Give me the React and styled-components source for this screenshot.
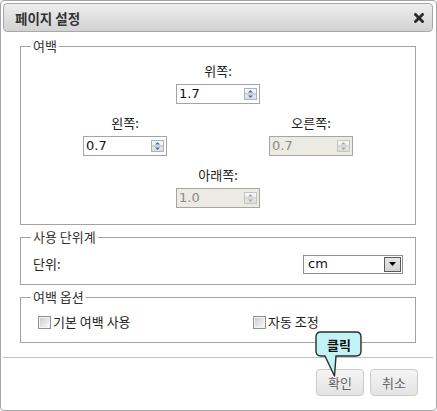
import React from 'react';
import styled, { createGlobalStyle } from 'styled-components';

const GlobalStyle = createGlobalStyle`
  html, body {
    margin: 0;
    padding: 0;
    background: #fff;
  }
  body {
    font-family: "Noto Sans CJK KR", "DejaVu Sans", sans-serif;
    font-size: 13px;
    color: #222;
  }
  * {
    box-sizing: border-box;
  }
`;

const Dialog = styled.div`
  position: relative;
  width: 437px;
  height: 411px;
  border: 1px solid #a6a6a6;
  border-radius: 4px;
  background: #fff;
  display: flex;
  flex-direction: column;
`;

const TitleBar = styled.div`
  margin: 2px 3px 0 2px;
  height: 29px;
  border: 1px solid #a8a8a8;
  border-radius: 4px;
  background: linear-gradient(#eeeeee, #d2d2d2);
  display: flex;
  align-items: center;
  justify-content: space-between;
  padding: 0 8px 0 11px;
`;

const Title = styled.span`
  font-size: 13.5px;
  font-weight: bold;
  color: #333;
  line-height: 16px;
`;

const CloseButton = styled.button`
  border: 0;
  padding: 0;
  background: none;
  width: 10px;
  height: 10px;
  display: flex;
  cursor: pointer;
`;

const Body = styled.div`
  padding: 6px 20px 0 19px;
  display: flex;
  flex-direction: column;
  gap: 4px;
`;

const Group = styled.fieldset`
  margin: 0;
  padding: 0;
  min-width: 0;
  border: 1px solid #a3a3a3;
`;

const Legend = styled.legend`
  margin-left: 10px;
  padding: 0 2px;
  font-size: 13px;
  line-height: 16px;
  color: #333;
`;

const MarginGrid = styled.div`
  display: grid;
  grid-template-columns: repeat(3, 93px);
  grid-template-rows: repeat(3, 41px);
  row-gap: 11px;
  justify-content: center;
  padding: 9px 0 16px;
`;

const Cell = styled.div`
  grid-column: ${p => p.$col};
  grid-row: ${p => p.$row};
  display: flex;
  flex-direction: column;
  align-items: center;
  gap: 5px;
`;

const Label = styled.span`
  font-size: 13px;
  line-height: 16px;
  color: #222;
`;

const SpinBox = styled.div`
  width: 84px;
  height: 20px;
  border: 1px solid #a5a5a5;
  background: ${p => (p.$disabled ? '#ebebe4' : '#fff')};
  display: flex;
  align-items: center;
  padding: 0 2px 0 2px;
`;

const Value = styled.span`
  flex: 1;
  font-family: "DejaVu Sans", sans-serif;
  font-size: 13px;
  line-height: 16px;
  color: ${p => (p.$disabled ? '#8a8a8a' : '#111')};
`;

const Row = styled.div`
  display: flex;
  align-items: center;
  justify-content: space-between;
  height: 20px;
  margin: 9px 12px 10px 12px;
`;

const Select = styled.div`
  width: 100px;
  height: 19px;
  border: 1px solid #8f8f8f;
  background: #fff;
  display: flex;
  align-items: center;
  padding: 0 1px 0 4px;
`;

const SelectText = styled.span`
  flex: 1;
  font-family: "DejaVu Sans", sans-serif;
  font-size: 13px;
  line-height: 16px;
  color: #111;
`;

const SelectButton = styled.span`
  width: 17px;
  height: 15px;
  border: 1px solid #5a5a5a;
  background: linear-gradient(#e6e6e6, #d2d2d2);
  display: flex;
  align-items: center;
  justify-content: center;
`;

const OptionRow = styled.div`
  display: grid;
  grid-template-columns: 215px 1fr;
  height: 16px;
  align-items: center;
  margin: 9px 0 12px 17px;
`;

const CheckLabel = styled.label`
  display: flex;
  align-items: center;
  gap: 2px;
  font-size: 13px;
  line-height: 16px;
  color: #222;
`;

const CheckBox = styled.span`
  width: 13px;
  height: 13px;
  border: 1px solid #8e8f8f;
  background: linear-gradient(135deg, #c4c4c4 0%, #e6e6e6 55%, #fbfbfb 100%);
  box-shadow: inset 0 0 0 1px #f4f4f4;
`;

const Divider = styled.div`
  margin: 14px 3px 0 2px;
  height: 1px;
  background: #c2c2c2;
`;

const Footer = styled.div`
  display: flex;
  justify-content: flex-end;
  gap: 6px;
  padding: 11px 18px 0 0;
`;

const Button = styled.button`
  width: 48px;
  height: 27px;
  border: 1px solid #cbcbcb;
  border-radius: 4px;
  background: linear-gradient(#f5f5f5, #e3e3e3);
  font-family: "Noto Sans CJK KR", sans-serif;
  font-size: 13px;
  color: #666;
  padding: 0;
  cursor: pointer;
`;

const Callout = styled.div`
  position: absolute;
  left: 314px;
  top: 330px;
  width: 48px;
  height: 47px;
`;

const CalloutText = styled.span`
  position: absolute;
  left: 0;
  top: 0;
  width: 48px;
  height: 26px;
  display: flex;
  align-items: center;
  justify-content: center;
  font-size: 13px;
  font-weight: bold;
  color: #111;
`;

const CloseIcon = () => (
  <svg width="10" height="10" viewBox="0 0 10 10">
    <path d="M1.5 1.5 L8.5 8.5 M8.5 1.5 L1.5 8.5" stroke="#2b2b2b" strokeWidth="2.8" strokeLinecap="square" />
  </svg>
);

const SpinArrows = ({ disabled }) => {
  const arrow = disabled ? '#a8a8a8' : '#4468c0';
  const edge = disabled ? '#c4c4c4' : '#aab2c2';
  return (
    <svg width="13" height="12" viewBox="0 0 13 12">
      <defs>
        <linearGradient id={disabled ? 'spinOff' : 'spinOn'} x1="0" y1="0" x2="0" y2="1">
          <stop offset="0" stopColor="#fafafa" />
          <stop offset="1" stopColor="#dcdcdc" />
        </linearGradient>
      </defs>
      <rect x="0.5" y="0.5" width="12" height="11" fill={`url(#${disabled ? 'spinOff' : 'spinOn'})`} stroke={edge} />
      <line x1="1" y1="6" x2="12" y2="6" stroke={edge} />
      <path d="M4 4.5 L9 4.5 L6.5 2 Z" fill={arrow} />
      <path d="M4 7.5 L9 7.5 L6.5 10 Z" fill={arrow} />
    </svg>
  );
};

const SpinInput = ({ value, disabled }) => (
  <SpinBox $disabled={disabled}>
    <Value $disabled={disabled}>{value}</Value>
    <SpinArrows disabled={disabled} />
  </SpinBox>
);

const margins = [
  { label: '위쪽:', value: '1.7', col: 2, row: 1 },
  { label: '왼쪽:', value: '0.7', col: 1, row: 2 },
  { label: '오른쪽:', value: '0.7', col: 3, row: 2, disabled: true },
  { label: '아래쪽:', value: '1.0', col: 2, row: 3, disabled: true },
];

const App = () => {
  return (
    <>
      <GlobalStyle />
      <Dialog>
        <TitleBar>
          <Title>페이지 설정</Title>
          <CloseButton aria-label="닫기">
            <CloseIcon />
          </CloseButton>
        </TitleBar>

        <Body>
          <Group>
            <Legend>여백</Legend>
            <MarginGrid>
              {margins.map(m => (
                <Cell key={m.label} $col={m.col} $row={m.row}>
                  <Label>{m.label}</Label>
                  <SpinInput value={m.value} disabled={m.disabled} />
                </Cell>
              ))}
            </MarginGrid>
          </Group>

          <Group>
            <Legend>사용 단위계</Legend>
            <Row>
              <Label>단위:</Label>
              <Select>
                <SelectText>cm</SelectText>
                <SelectButton>
                  <svg width="7" height="4" viewBox="0 0 7 4">
                    <path d="M0 0 L7 0 L3.5 4 Z" fill="#000" />
                  </svg>
                </SelectButton>
              </Select>
            </Row>
          </Group>

          <Group>
            <Legend>여백 옵션</Legend>
            <OptionRow>
              <CheckLabel>
                <CheckBox />
                기본 여백 사용
              </CheckLabel>
              <CheckLabel>
                <CheckBox />
                자동 조정
              </CheckLabel>
            </OptionRow>
          </Group>
        </Body>

        <Divider />

        <Footer>
          <Button>확인</Button>
          <Button>취소</Button>
        </Footer>

        <Callout>
          <svg width="48" height="47" viewBox="0 0 48 47">
            <path
              d="M6 1 H41 Q46 1 46 6 V20 Q46 25 41 25 H21 L19.5 45 L10 25 H6 Q1 25 1 20 V6 Q1 1 6 1 Z"
              fill="#c2f3f7"
              stroke="#2a2a2a"
              strokeWidth="1.4"
              strokeLinejoin="round"
            />
          </svg>
          <CalloutText>클릭</CalloutText>
        </Callout>
      </Dialog>
    </>
  );
};

export default App;
